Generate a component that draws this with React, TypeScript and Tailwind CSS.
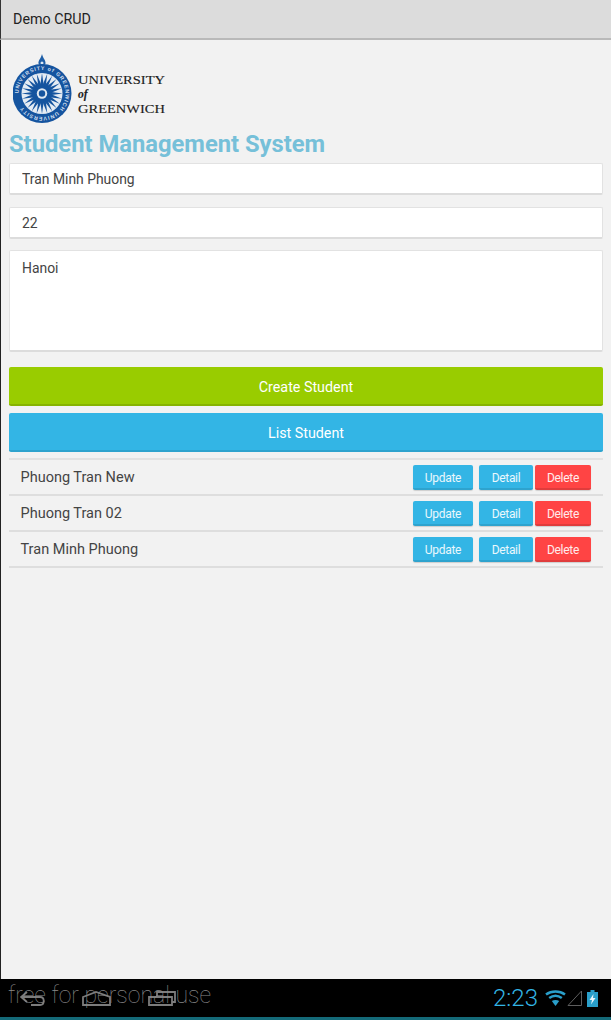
import React from "react";

function Logo() {
  const spokes = Array.from({ length: 24 }, (_, i) => i * 15);
  return (
    <svg width="160" height="72" viewBox="0 0 160 72" className="block">
      <g transform="translate(29 39.5)">
        <path d="M0 -39.5 C1 -35 4 -33 3.5 -30 C3 -27.5 -3 -27.5 -3.5 -30 C-4 -33 -1 -35 0 -39.5Z" fill="#1f5fa8" />
        <circle r="1.5" cy="-30.5" fill="#dfe9f3" />
        <circle r="29.5" fill="#15549f" />
        <circle r="20.5" fill="#e4ebf3" />
        <defs>
          <path id="ring" d="M -23.5 0 A 23.5 23.5 0 1 1 23.5 0 A 23.5 23.5 0 1 1 -23.5 0" />
        </defs>
        <text fontFamily="Liberation Sans, sans-serif" fontSize="5.4" fontWeight="700" fill="#cfdeee" letterSpacing="0.75">
          <textPath href="#ring" startOffset="0">UNIVERSITY of GREENWICH UNIVERSITY</textPath>
        </text>
        {spokes.map((a) => (
          <path key={a} d="M-2 -6 L0 -20.5 L2 -6Z" fill="#15549f" transform={`rotate(${a})`} />
        ))}
        <circle r="7.5" fill="#15549f" />
        <circle r="5.2" fill="#dfe8f1" />
        <circle r="3.2" fill="#15549f" />
      </g>
      <g fontFamily="Liberation Serif, serif" fill="#1d1d1d" stroke="#1d1d1d" strokeWidth="0.15">
        <text x="65" y="29.5" fontSize="13.4" textLength="87" lengthAdjust="spacingAndGlyphs">UNIVERSITY</text>
        <text x="65" y="44" fontSize="11.5" fontStyle="italic" fontWeight="700">of</text>
        <text x="65" y="59" fontSize="13.4" textLength="87" lengthAdjust="spacingAndGlyphs">GREENWICH</text>
      </g>
    </svg>
  );
}

function Btn({ label, color, w }: { label: string; color: "blue" | "red"; w: string }) {
  return (
    <button
      className={`mb-[2px] h-[25px] rounded-[2px] pt-[3px] text-[12px] leading-[16px] tracking-[-0.3px] text-white/90 border-b-2 shadow-[0_1px_1px_rgba(0,0,0,0.15)] ${w} ${
        color === "blue" ? "bg-[#33b5e5] border-[#2ea3ce]" : "bg-[#ff4444] border-[#e03c3c]"
      }`}
    >
      {label}
    </button>
  );
}

function Row({ name }: { name: string }) {
  return (
    <div className="flex h-[36px] items-center border-b-2 border-[#dedede] pl-[11.5px] pr-[12px] pt-[2px]">
      <span className="flex-1 text-[14.5px] text-[#444444]">{name}</span>
      <Btn label="Update" color="blue" w="w-[60px] mr-[6px]" />
      <Btn label="Detail" color="blue" w="w-[54px] mr-[2px]" />
      <Btn label="Delete" color="red" w="w-[56px]" />
    </div>
  );
}

const field =
  "w-full rounded-[2px] border border-[#e2e2e2] border-b-2 border-b-[#dcdcdc] bg-white pl-[12px] text-[13.9px] text-[#444444] outline-none";

export default function App() {
  return (
    <div className="flex h-[1020px] w-[611px] flex-col overflow-hidden bg-[#f2f2f2] font-['Roboto',sans-serif]">
      <header className="flex h-[40px] shrink-0 items-center border-b-2 border-l border-[#b9b9b9] border-l-[#333333] bg-[#dcdcdc] pl-[12px] pt-[1px] text-[14.3px] text-[#222222]">
        Demo CRUD
      </header>
      <main className="flex flex-1 flex-col border-l border-[#222222] pl-[8px] pr-[8px]">
        <div className="pl-[4px] pt-[14px]">
          <Logo />
        </div>
        <h1 className="mt-[4px] h-[29px] text-[23.75px] font-bold leading-[29px] text-[#76c0d9]">Student Management System</h1>
        <input readOnly value="Tran Minh Phuong" className={`mt-[4px] h-[32px] ${field}`} />
        <input readOnly value="22" className={`mt-[12px] h-[32px] ${field}`} />
        <textarea readOnly value="Hanoi" className={`mt-[11px] h-[102px] resize-none pt-[7px] ${field}`} />
        <button className="mt-[15px] h-[39px] w-full shrink-0 rounded-[2px] border-b-2 border-[#86b300] bg-[#99cc00] pt-[4px] text-[14.3px] text-white">
          Create Student
        </button>
        <button className="mt-[7px] h-[39px] w-full shrink-0 rounded-[2px] border-b-2 border-[#2ea3ce] bg-[#33b5e5] pt-[4px] text-[14.3px] text-white">
          List Student
        </button>
        <div className="mt-[6px] border-t-2 border-[#e2e2e2]">
          <Row name="Phuong Tran New" />
          <Row name="Phuong Tran 02" />
          <Row name="Tran Minh Phuong" />
        </div>
      </main>
      <footer className="relative flex h-[38px] shrink-0 items-center bg-black pr-[13px]">
        <div className="flex flex-1 items-center pl-[20px] text-[#7c7c7c]">
          <svg width="26" height="15" viewBox="0 0 26 15" fill="none" stroke="currentColor" strokeWidth="1.8">
            <path d="M7 1 L1 6 L7 11 M1 6 H20 C25 6 25 14 20 14 H11" />
          </svg>
          <svg className="ml-[36px]" width="30" height="15" viewBox="0 0 30 15" fill="none" stroke="currentColor" strokeWidth="1.8">
            <path d="M1 14 V6 L14 1 L28 6 V14 Z" />
          </svg>
          <svg className="ml-[36px]" width="28" height="15" viewBox="0 0 28 15" fill="none" stroke="currentColor" strokeWidth="1.8">
            <path d="M9 5 V1 H27 V11 H24 M1 6 H24 V14 H1 Z" />
          </svg>
        </div>
        <span className="absolute left-[8px] top-0 text-[23px] font-thin leading-[34px] text-[#8a8a8a]">
          free for personal use
        </span>
        <span className="text-[24px] font-light leading-none text-[#33b5e5]">2:23</span>
        <svg className="ml-[7px]" width="21" height="16" viewBox="0 0 21 16" fill="none" stroke="#2a9fca" strokeWidth="2.6">
          <path d="M1 4.5 C6.5 0.5 14.5 0.5 20 4.5 M4.2 8 C8 5.3 13 5.3 16.8 8" />
          <path d="M10.5 16 L6.8 11 C9 9.6 12 9.6 14.2 11Z" fill="#2a9fca" stroke="none" />
        </svg>
        <svg className="ml-[1px]" width="15" height="16" viewBox="0 0 15 16" fill="none" stroke="#5e5e5e" strokeWidth="1">
          <path d="M1 15.5 L14.5 1 V15.5 Z" />
        </svg>
        <svg className="ml-[5px]" width="11" height="17" viewBox="0 0 11 17">
          <rect x="3.5" y="0" width="4" height="2" fill="#2a9fca" />
          <rect x="0" y="2" width="11" height="15" fill="#2a9fca" />
          <path d="M6.5 4 L2.5 10 H5 L4 14.5 L8.5 8 H6 Z" fill="#e8f6fc" />
        </svg>
      </footer>
      <div className="h-[3px] shrink-0 bg-[#146a78]" />
    </div>
  );
}
